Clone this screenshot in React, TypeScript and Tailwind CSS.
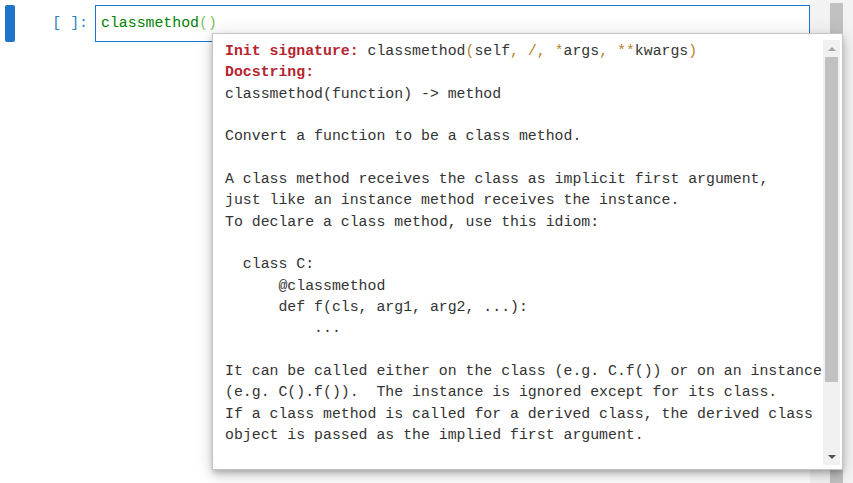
import * as React from "react";

const mono = "font-['Liberation_Mono','DejaVu_Sans_Mono',monospace]";

function Op({ children }: { children: React.ReactNode }) {
  return <span className="text-[#b8822a]">{children}</span>;
}

function Label({ children }: { children: React.ReactNode }) {
  return <span className="font-bold text-[#b5242f]">{children}</span>;
}

const docLines = [
  "classmethod(function) -> method",
  "",
  "Convert a function to be a class method.",
  "",
  "A class method receives the class as implicit first argument,",
  "just like an instance method receives the instance.",
  "To declare a class method, use this idiom:",
  "",
  "  class C:",
  "      @classmethod",
  "      def f(cls, arg1, arg2, ...):",
  "          ...",
  "",
  "It can be called either on the class (e.g. C.f()) or on an instance",
  "(e.g. C().f()).  The instance is ignored except for its class.",
  "If a class method is called for a derived class, the derived class",
  "object is passed as the implied first argument.",
];

function Tooltip() {
  return (
    <div className="absolute left-[212px] top-[33px] w-[631px] h-[437px] bg-white border border-[#c4c4c4] shadow-[0_3px_5px_-1px_rgba(0,0,0,0.2),0_6px_10px_0_rgba(0,0,0,0.14),0_1px_18px_0_rgba(0,0,0,0.12)] flex pt-[6px] pb-[4px] pr-[2px]">
      <div className={`flex-1 overflow-hidden pl-[12px] pt-[1px] ${mono} text-[14.85px] leading-[21.33px] text-[#333] whitespace-pre`}>
        <div>
          <Label>Init signature:</Label> classmethod<Op>(</Op>self<Op>, /, *</Op>args
          <Op>, **</Op>kwargs<Op>)</Op>
        </div>
        <div>
          <Label>Docstring:</Label>
        </div>
        {docLines.map((l, i) => (
          <div key={i}>{l === "" ? "\u00a0" : l}</div>
        ))}
      </div>
      <div className="w-[17px] bg-[#f1f1f1] flex flex-col items-center">
        <div className="h-[17px] flex items-center justify-center">
          <div className="w-0 h-0 border-l-[4px] border-r-[4px] border-b-[4px] border-l-transparent border-r-transparent border-b-[#a3a3a3]" />
        </div>
        <div className="w-[13px] h-[325px] bg-[#c1c1c1]" />
        <div className="flex-1" />
        <div className="h-[17px] flex items-center justify-center">
          <div className="w-0 h-0 border-l-[4px] border-r-[4px] border-t-[4px] border-l-transparent border-r-transparent border-t-[#505050]" />
        </div>
      </div>
    </div>
  );
}

export default function App() {
  return (
    <div className="relative w-[853px] h-[483px] overflow-hidden bg-white flex">
      <div className="w-[810px] pt-[5px]">
        <div className="flex items-stretch h-[37px]">
          <div className="ml-[5px] w-[10px] rounded-[2px] bg-[#1f74c9]" />
          <div className={`w-[80px] flex items-center justify-end pr-[7px] ${mono} text-[14.85px] text-[#307fc1]`}>
            [ ]:
          </div>
          <div className={`flex-1 border border-[#1976d2] bg-white flex items-center px-[5px] ${mono} text-[14.85px]`}>
            <span className="text-[#008000]">classmethod</span>
            <span className="text-[#84c25f]">()</span>
          </div>
        </div>
      </div>
      <div className="flex-1 bg-[#f3f3f3] pt-[3px]">
        <div className="ml-[20px] w-[13px] h-full bg-[#c1c1c1]" />
      </div>
      <Tooltip />
    </div>
  );
}
